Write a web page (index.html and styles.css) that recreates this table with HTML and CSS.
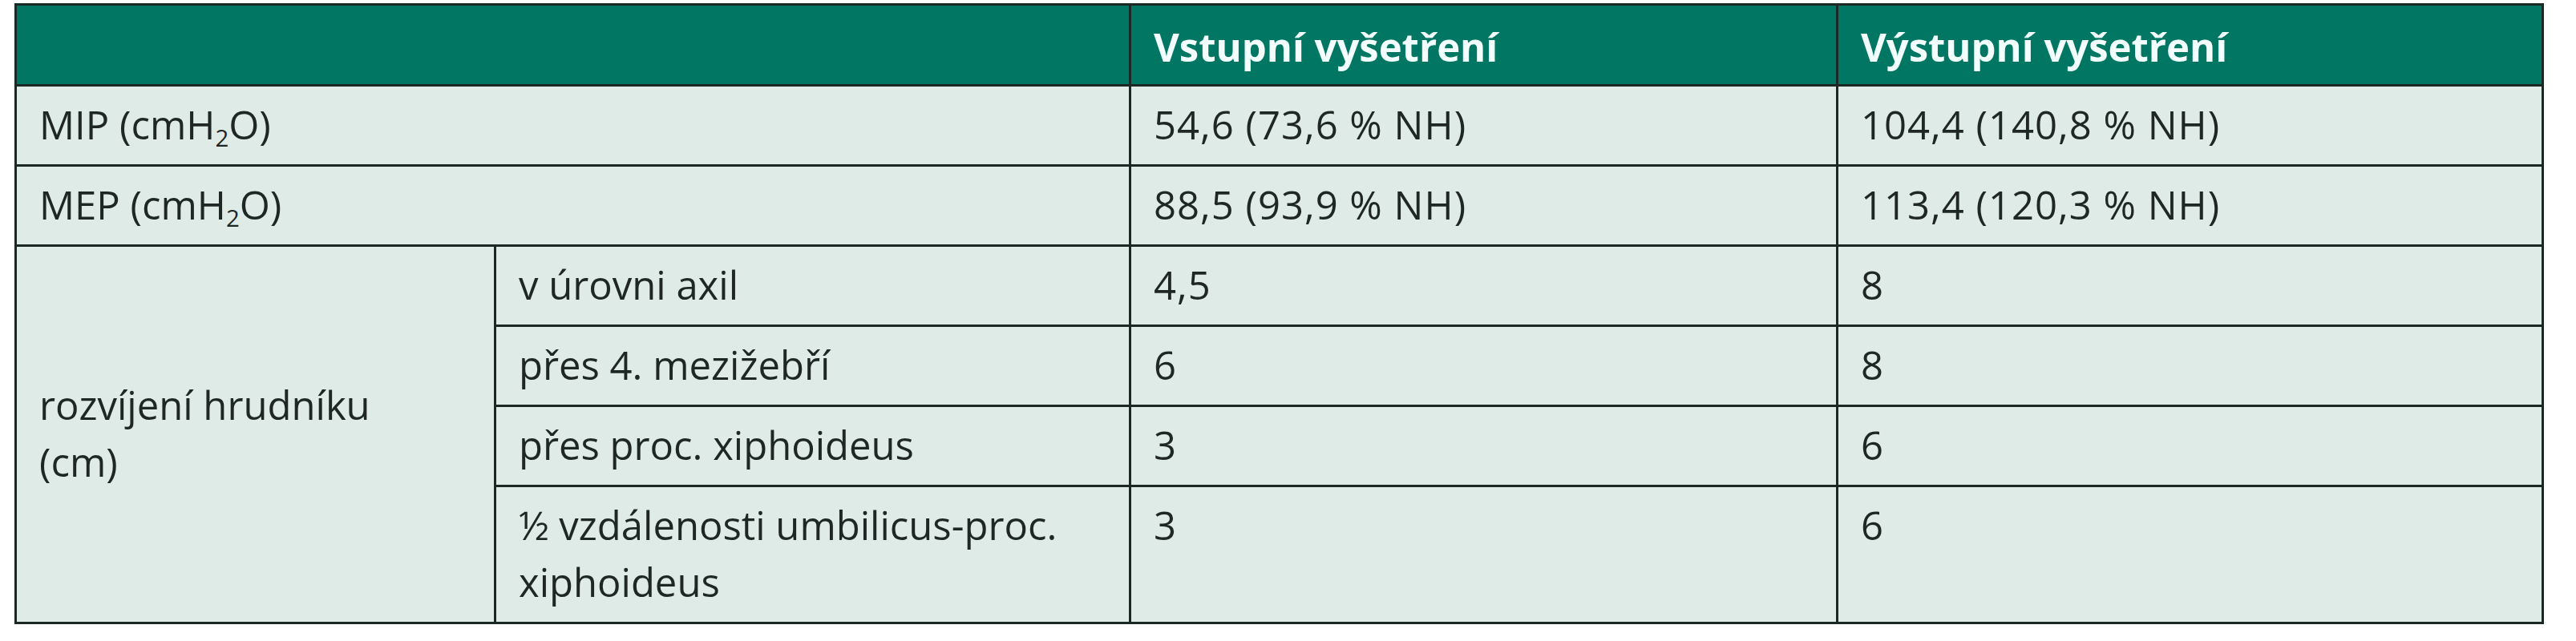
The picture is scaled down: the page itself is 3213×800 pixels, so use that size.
FILE: index.html
```html
<!DOCTYPE html>
<html lang="cs">
<head>
<meta charset="utf-8">
<title>Tabulka</title>
<link rel="stylesheet" href="styles.css">
</head>
<body>
<table class="data">
  <colgroup>
    <col class="c1">
    <col class="c2">
    <col class="c3">
    <col class="c4">
  </colgroup>
  <thead>
    <tr>
      <th colspan="2"></th>
      <th>Vstupní vyšetření</th>
      <th>Výstupní vyšetření</th>
    </tr>
  </thead>
  <tbody>
    <tr>
      <td colspan="2">MIP (cmH<sub>2</sub>O)</td>
      <td class="num">54,6 (73,6 % NH)</td>
      <td class="num">104,4 (140,8 % NH)</td>
    </tr>
    <tr>
      <td colspan="2">MEP (cmH<sub>2</sub>O)</td>
      <td class="num">88,5 (93,9 % NH)</td>
      <td class="num">113,4 (120,3 % NH)</td>
    </tr>
    <tr>
      <td rowspan="4" class="group">rozvíjení hrudníku<br>(cm)</td>
      <td>v úrovni axil</td>
      <td class="num">4,5</td>
      <td class="num">8</td>
    </tr>
    <tr>
      <td>přes 4. mezižebří</td>
      <td class="num">6</td>
      <td class="num">8</td>
    </tr>
    <tr>
      <td>přes proc. xiphoideus</td>
      <td class="num">3</td>
      <td class="num">6</td>
    </tr>
    <tr>
      <td>½ vzdálenosti umbilicus-proc. xiphoideus</td>
      <td class="num">3</td>
      <td class="num">6</td>
    </tr>
  </tbody>
</table>
</body>
</html>
```

FILE: styles.css
```css
html, body {
  margin: 0;
  padding: 0;
  background: #ffffff;
}

body {
  padding: 4px 0 0 18px;
  font-family: "Open Sans", "Noto Sans", "DejaVu Sans", sans-serif;
}

.data {
  border-collapse: collapse;
  table-layout: fixed;
  width: 3155px;
  font-size: 49px;
  line-height: 71px;
  color: #1f2724;
}

.c1 { width: 598px; }
.c2 { width: 792px; }
.c3 { width: 882px; }
.c4 { width: 880px; }

.data th,
.data td {
  border: 3px solid #1c2824;
  text-align: left;
  vertical-align: top;
}

.data th {
  background: #007663;
  color: #f2fffd;
  font-weight: 700;
  font-size: 49px;
  padding: 16px 28px 11px 28px;
}

.data td {
  background: #dfebe7;
  font-weight: 400;
  padding: 12px 28px 14px 28px;
}

.data td.num {
  letter-spacing: 1px;
}

.data td.group {
  vertical-align: middle;
}

.data sub {
  font-size: 0.6em;
  line-height: 0;
  vertical-align: -0.3em;
}
```
